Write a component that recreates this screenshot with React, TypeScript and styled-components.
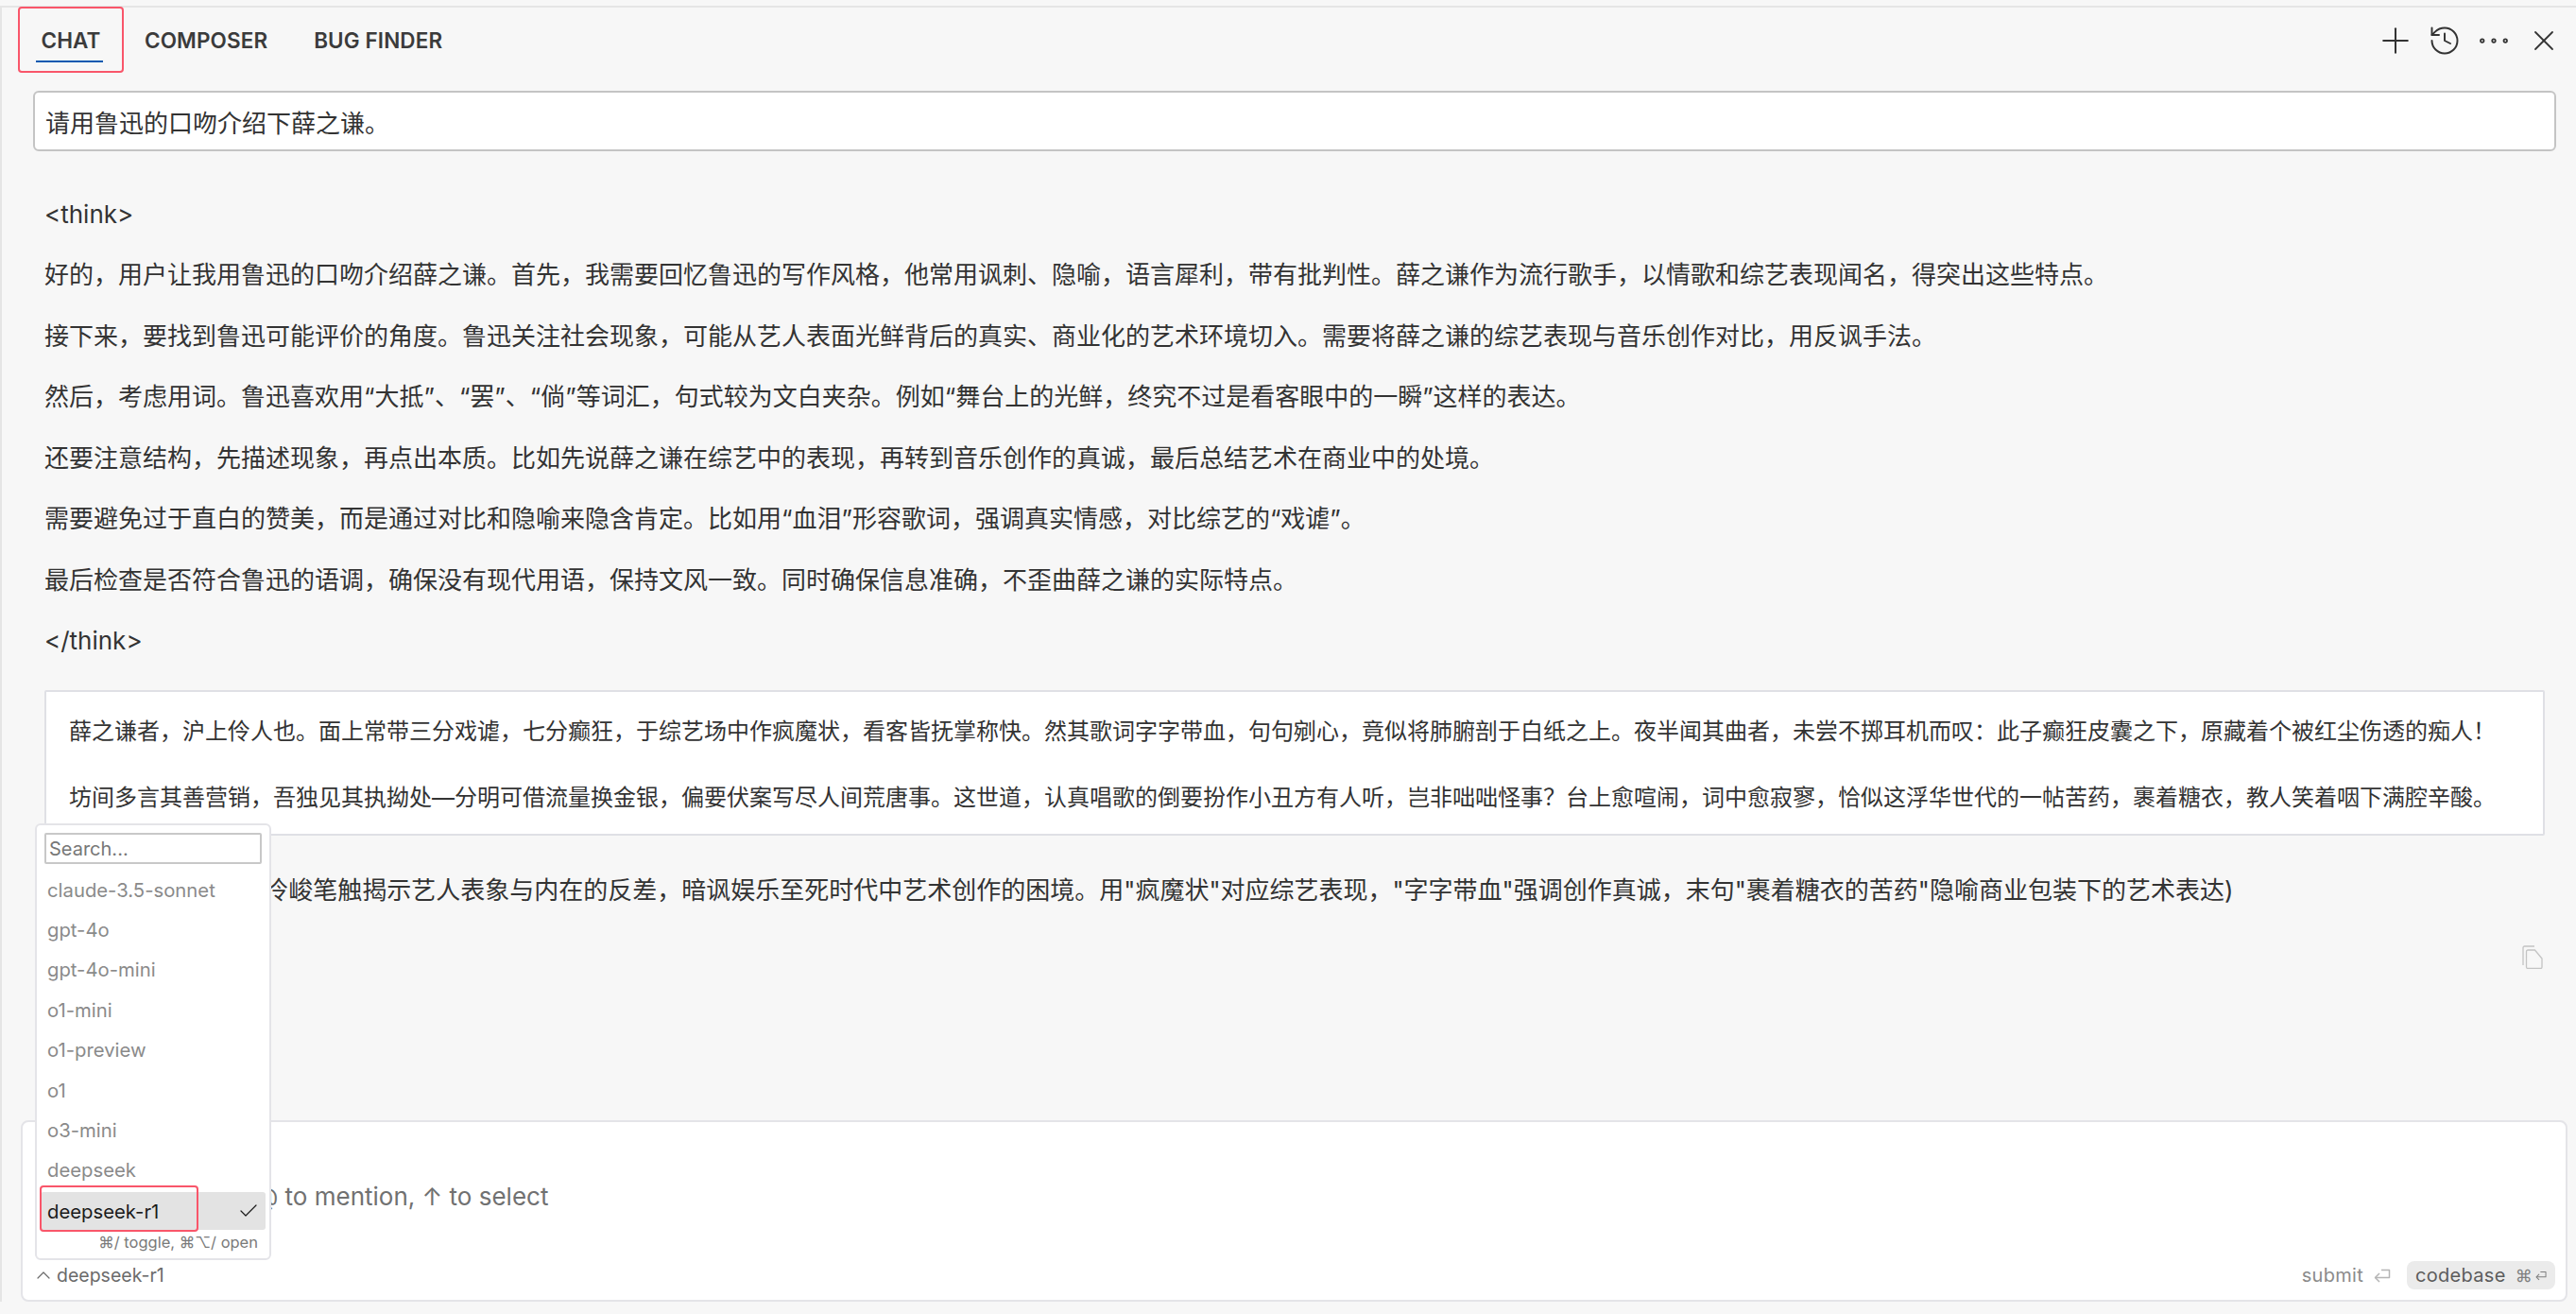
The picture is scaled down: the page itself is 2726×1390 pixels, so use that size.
import React from "react";
import styled, { createGlobalStyle } from "styled-components";
import { Plus, History, MoreHorizontal, X, ChevronUp, Check } from "lucide-react";

const Global = createGlobalStyle`
  html, body { margin: 0; padding: 0; background: #f7f7f7; }
  * { box-sizing: border-box; }
`;

const Page = styled.div`
  position: relative;
  width: 2726px;
  height: 1390px;
  padding: 6px 0 13px 0;
  background: #f7f7f7;
  font-family: Inter, "Noto Sans CJK SC", sans-serif;
  color: #333;
  overflow: hidden;
`;

const Panel = styled.div`
  display: flex;
  flex-direction: column;
  height: 100%;
  border-top: 2px solid #e5e5e5;
  border-left: 2px solid #e5e5e5;
`;

const TabBar = styled.div`
  display: flex;
  align-items: flex-start;
  justify-content: space-between;
  height: 89px;
  margin-top: -1px;
  padding: 0 8px 0 17px;
  flex: none;
`;

const Tabs = styled.div`
  display: flex;
  gap: 22px;
`;

const Tab = styled.div<{ $active?: boolean }>`
  position: relative;
  height: 70px;
  width: ${(p) => (p.$active ? "112px" : "auto")};
  padding-right: ${(p) => (p.$active ? "0" : "27px")};
  display: flex;
  align-items: center;
  justify-content: center;
  font-size: 22.5px;
  font-weight: 600;
  letter-spacing: 0.1px;
  color: #3b3b3b;
`;

const Underline = styled.span`
  position: absolute;
  left: 19px;
  right: 22px;
  bottom: 11px;
  height: 2px;
  background: #0a5ab0;
`;

const RedBox = styled.span`
  position: absolute;
  border: 2px solid #f9566a;
  border-radius: 4px;
  inset: 0;
  pointer-events: none;
`;

const Actions = styled.div`
  display: flex;
  align-items: center;
  height: 72px;
  color: #333;
`;

const Action = styled.span`
  width: 52.4px;
  display: flex;
  align-items: center;
  justify-content: center;
`;

const Question = styled.div`
  flex: none;
  margin: 0 21px 0 33px;
  height: 64px;
  display: flex;
  align-items: center;
  padding: 0 11px;
  background: #fff;
  border: 2px solid #c4c4c4;
  border-radius: 6px;
  font-size: 26px;
  color: #333;
`;

const Message = styled.div`
  flex: 1;
  min-height: 0;
  padding: 34.5px 33px 0 45px;
  display: flex;
  flex-direction: column;
`;

const Para = styled.p`
  flex: none;
  margin: 0;
  height: 64.5px;
  line-height: 64.5px;
  font-size: 26px;
  color: #333;
  white-space: nowrap;
`;

const Quote = styled.div`
  flex: none;
  margin: 19.5px 0 25.5px;
  height: 154px;
  padding: 7px 24px 0;
  background: #fff;
  border: 2px solid #dfe0e5;
  border-radius: 2px;
`;

const QuoteLine = styled.p`
  margin: 0;
  height: 70px;
  line-height: 70px;
  font-size: 24px;
  color: #333;
  white-space: nowrap;
`;

const CopyRow = styled.div`
  display: flex;
  justify-content: flex-end;
  padding: 25.5px 2px 0 0;
`;

const InputCard = styled.div`
  flex: none;
  height: 192px;
  margin: 0 9px 0 20px;
  background: #fff;
  border: 2px solid #e4e4e8;
  border-radius: 8px;
  display: flex;
  flex-direction: column;
`;

const Placeholder = styled.div`
  flex: 1;
  padding: 63px 0 0 23px;
  font-size: 26px;
  color: #717171;
`;

const Footer = styled.div`
  flex: none;
  height: 52px;
  display: flex;
  align-items: center;
  justify-content: space-between;
  padding: 0 11px 0 10px;
`;

const ModelPick = styled.div`
  display: flex;
  align-items: center;
  gap: 2px;
  font-size: 19.5px;
  color: #6b6b6b;
`;

const Keys = styled.div`
  display: flex;
  align-items: center;
  gap: 17px;
`;

const KeyLabel = styled.div`
  display: flex;
  align-items: center;
  gap: 11px;
  font-size: 20px;
  letter-spacing: 0.3px;
  color: #8b8b8b;
`;

const Pill = styled.div`
  display: flex;
  align-items: center;
  height: 30px;
  width: 157px;
  padding: 0 9px;
  background: #ebebeb;
  border-radius: 8px;
  font-size: 20px;
  letter-spacing: 0.3px;
  color: #5c5c5c;
`;

const Glyph = styled.span`
  margin: 0 3px 0 10px;
  font-size: 18px;
  color: #7f7f7f;
`;

const Popup = styled.div`
  position: absolute;
  left: 37px;
  top: 871px;
  width: 250px;
  height: 462px;
  background: #fff;
  border: 2px solid #e4e4e8;
  border-radius: 6px;
  padding: 8px 4px 0;
  display: flex;
  flex-direction: column;
`;

const Search = styled.div`
  flex: none;
  height: 33px;
  margin: 0 4px 6px;
  padding-left: 3px;
  border: 2px solid #c8c8c8;
  border-radius: 2px;
  display: flex;
  align-items: center;
  font-size: 20px;
  color: #777;
`;

const Item = styled.div<{ $selected?: boolean }>`
  position: relative;
  flex: none;
  height: ${(p) => (p.$selected ? "40px" : "42.4px")};
  margin-top: ${(p) => (p.$selected ? "2px" : "0")};
  padding: 0 6px 0 7px;
  display: flex;
  align-items: center;
  justify-content: space-between;
  font-size: 20.3px;
  border-radius: 3px;
  color: ${(p) => (p.$selected ? "#1a1a1a" : "#8a8a8a")};
  background: ${(p) => (p.$selected ? "#e3e3e3" : "transparent")};
`;

const ItemRed = styled.span`
  position: absolute;
  left: -1px;
  top: -7px;
  width: 168px;
  height: 49px;
  border: 2px solid #f9566a;
  border-radius: 4px;
`;

const Hint = styled.div`
  flex: none;
  text-align: right;
  padding: 3px 8px 0 0;
  font-size: 16.5px;
  color: #7a7a7a;
`;

const ReturnIcon = ({ color }: { color: string }) => (
  <svg width="18" height="15" viewBox="0 0 18 15" fill="none" stroke={color} strokeWidth="1.5" strokeLinejoin="round">
    <path d="M8 1.5h8.5v8H1.5" />
    <path d="M6 5L1.5 9.5 6 14" />
  </svg>
);

const CopyIcon = () => (
  <svg width="22" height="25" viewBox="0 0 22 25" fill="none" stroke="#c4c4c4" strokeWidth="1.3">
    <path d="M1 21V2.5A1.5 1.5 0 0 1 2.5 1H13" />
    <path d="M4.5 6.5A1.5 1.5 0 0 1 6 5h7.5l7.5 9v9a1.5 1.5 0 0 1-1.5 1.5H6A1.5 1.5 0 0 1 4.5 23z" />
  </svg>
);

const models = ["claude-3.5-sonnet", "gpt-4o", "gpt-4o-mini", "o1-mini", "o1-preview", "o1", "o3-mini", "deepseek"];

const thoughts = [
  "<think>",
  "好的，用户让我用鲁迅的口吻介绍薛之谦。首先，我需要回忆鲁迅的写作风格，他常用讽刺、隐喻，语言犀利，带有批判性。薛之谦作为流行歌手，以情歌和综艺表现闻名，得突出这些特点。",
  "接下来，要找到鲁迅可能评价的角度。鲁迅关注社会现象，可能从艺人表面光鲜背后的真实、商业化的艺术环境切入。需要将薛之谦的综艺表现与音乐创作对比，用反讽手法。",
  "然后，考虑用词。鲁迅喜欢用“大抵”、“罢”、“倘”等词汇，句式较为文白夹杂。例如“舞台上的光鲜，终究不过是看客眼中的一瞬”这样的表达。",
  "还要注意结构，先描述现象，再点出本质。比如先说薛之谦在综艺中的表现，再转到音乐创作的真诚，最后总结艺术在商业中的处境。",
  "需要避免过于直白的赞美，而是通过对比和隐喻来隐含肯定。比如用“血泪”形容歌词，强调真实情感，对比综艺的“戏谑”。",
  "最后检查是否符合鲁迅的语调，确保没有现代用语，保持文风一致。同时确保信息准确，不歪曲薛之谦的实际特点。",
  "</think>",
];

export default function App() {
  return (
    <Page>
      <Global />
      <Panel>
        <TabBar>
          <Tabs>
            <Tab $active>
              CHAT
              <Underline />
              <RedBox />
            </Tab>
            <Tab>COMPOSER</Tab>
            <Tab>BUG FINDER</Tab>
          </Tabs>
          <Actions>
            <Action><Plus size={44} strokeWidth={1.1} /></Action>
            <Action><History size={36} strokeWidth={1.3} /></Action>
            <Action><MoreHorizontal size={42} strokeWidth={1} /></Action>
            <Action><X size={36} strokeWidth={1.2} /></Action>
          </Actions>
        </TabBar>
        <Question>请用鲁迅的口吻介绍下薛之谦。</Question>
        <Message>
          {thoughts.map((t) => (
            <Para key={t}>{t}</Para>
          ))}
          <Quote>
            <QuoteLine>薛之谦者，沪上伶人也。面上常带三分戏谑，七分癫狂，于综艺场中作疯魔状，看客皆抚掌称快。然其歌词字字带血，句句剜心，竟似将肺腑剖于白纸之上。夜半闻其曲者，未尝不掷耳机而叹：此子癫狂皮囊之下，原藏着个被红尘伤透的痴人！</QuoteLine>
            <QuoteLine>坊间多言其善营销，吾独见其执拗处—分明可借流量换金银，偏要伏案写尽人间荒唐事。这世道，认真唱歌的倒要扮作小丑方有人听，岂非咄咄怪事？台上愈喧闹，词中愈寂寥，恰似这浮华世代的一帖苦药，裹着糖衣，教人笑着咽下满腔辛酸。</QuoteLine>
          </Quote>
          <Para>(注: 此段以鲁迅式的冷峻笔触揭示艺人表象与内在的反差，暗讽娱乐至死时代中艺术创作的困境。用"疯魔状"对应综艺表现，"字字带血"强调创作真诚，末句"裹着糖衣的苦药"隐喻商业包装下的艺术表达)</Para>
          <CopyRow>
            <CopyIcon />
          </CopyRow>
        </Message>
        <InputCard>
          <Placeholder>Ask anything ⌘L, @ to mention, ↑ to select</Placeholder>
          <Footer>
            <ModelPick>
              <ChevronUp size={24} strokeWidth={1.2} />
              deepseek-r1
            </ModelPick>
            <Keys>
              <KeyLabel>
                submit
                <ReturnIcon color="#b5b5b5" />
              </KeyLabel>
              <Pill>
                codebase
                <Glyph>⌘</Glyph>
                <ReturnIcon color="#7f7f7f" />
              </Pill>
            </Keys>
          </Footer>
        </InputCard>
      </Panel>
      <Popup>
        <Search>Search...</Search>
        {models.map((m) => (
          <Item key={m}>{m}</Item>
        ))}
        <Item $selected>
          deepseek-r1
          <Check size={24} strokeWidth={1.2} />
          <ItemRed />
        </Item>
        <Hint>⌘/ toggle, ⌘⌥/ open</Hint>
      </Popup>
    </Page>
  );
}
